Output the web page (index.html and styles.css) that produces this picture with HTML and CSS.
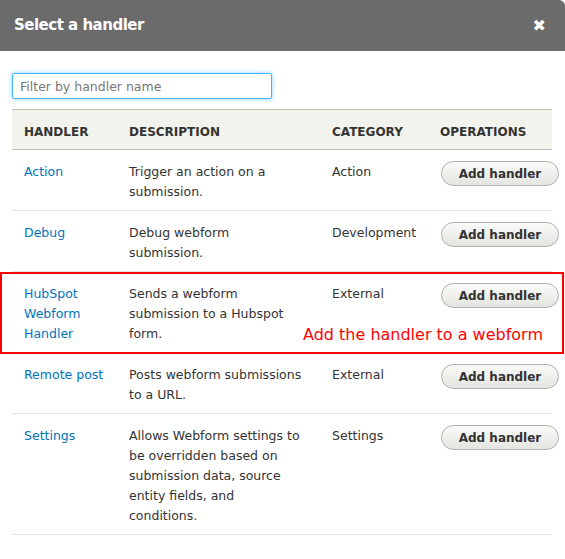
FILE: index.html
```html
<!DOCTYPE html>
<html lang="en">
<head>
  <meta charset="UTF-8" />
  <title>Select a handler</title>
  <link rel="stylesheet" href="styles.css">
</head>
<body>

  <div class="dialog">
    <!-- Title bar -->
    <div class="dialog-title">
      <h1>Select a handler</h1>
      <button class="close">&#x2716;</button>
    </div>

    <div class="dialog-body">
      <input type="text" class="filter" placeholder="Filter by handler name" />

      <table class="handlers">
        <colgroup>
          <col class="c-handler">
          <col class="c-desc">
          <col class="c-cat">
          <col class="c-ops">
        </colgroup>
        <thead>
          <tr>
            <th>Handler</th>
            <th>Description</th>
            <th>Category</th>
            <th>Operations</th>
          </tr>
        </thead>
        <tbody>
          <tr>
            <td><a href="#">Action</a></td>
            <td class="desc">Trigger an action on a submission.</td>
            <td>Action</td>
            <td><button class="add-btn">Add handler</button></td>
          </tr>
          <tr>
            <td><a href="#">Debug</a></td>
            <td class="desc">Debug webform submission.</td>
            <td>Development</td>
            <td><button class="add-btn">Add handler</button></td>
          </tr>
          <tr>
            <td><a href="#">HubSpot Webform Handler</a></td>
            <td class="desc">Sends a webform submission to a Hubspot form.</td>
            <td>External</td>
            <td><button class="add-btn">Add handler</button></td>
          </tr>
          <tr>
            <td><a href="#">Remote post</a></td>
            <td class="desc">Posts webform submissions to a URL.</td>
            <td>External</td>
            <td><button class="add-btn">Add handler</button></td>
          </tr>
          <tr>
            <td><a href="#">Settings</a></td>
            <td class="desc">Allows Webform settings to be overridden based on submission data, source entity fields, and conditions.</td>
            <td>Settings</td>
            <td><button class="add-btn">Add handler</button></td>
          </tr>
        </tbody>
      </table>
    </div>

    <!-- Annotation over the HubSpot row -->
    <div class="callout">
      <span>Add the handler to a webform</span>
    </div>
  </div>

</body>
</html>
```

FILE: styles.css
```css
/* Basic Reset */
* {
  margin: 0;
  padding: 0;
  box-sizing: border-box;
}

body {
  font-family: 'DejaVu Sans', Verdana, sans-serif;
  font-size: 12.5px;
  color: #333;
  background: #fff;
}

.dialog {
  position: relative;
  width: 565px;
  min-height: 559px;
  background: #fff;
}

/* Title bar */
.dialog-title {
  height: 51px;
  background: #6b6b6b;
  border-top-right-radius: 6px;
  display: flex;
  align-items: center;
  justify-content: space-between;
  padding: 0 19px 0 14px;
}

.dialog-title h1 {
  color: #fff;
  font-size: 15px;
  letter-spacing: -0.5px;
  font-weight: bold;
  margin-top: -1px;
}

.close {
  background: none;
  border: none;
  color: #fff;
  font-size: 16px;
  font-family: 'DejaVu Sans', sans-serif;
  cursor: pointer;
}

/* Body */
.dialog-body {
  padding: 22px 13px 0 12px;
}

.filter {
  display: block;
  width: 260px;
  height: 26px;
  padding: 0 7px;
  font-family: inherit;
  font-size: 12.5px;
  color: #333;
  border: 1px solid #40b6ff;
  border-radius: 2px;
  box-shadow: 0 0 5px #8fd2ff;
  outline: none;
}

.filter::placeholder {
  color: #777;
}

/* Table */
.handlers {
  margin-top: 10px;
  width: 540px;
  border-collapse: collapse;
  table-layout: fixed;
}

.c-handler { width: 105px; }
.c-desc { width: 203px; }
.c-cat { width: 108px; }
.c-ops { width: 124px; }

.handlers thead tr {
  background: #f3f3ee;
  border-top: 1px solid #bfbfba;
  border-bottom: 1px solid #bfbfba;
}

.handlers th {
  text-align: left;
  text-transform: uppercase;
  font-size: 12px;
  font-weight: bold;
  height: 40px;
  padding: 4px 12px 0;
}

.handlers td {
  vertical-align: top;
  line-height: 20px;
  padding: 12px 12px 8px;
  border-bottom: 1px solid #e4e4e4;
}

.handlers td.desc {
  padding-right: 17px;
}

.handlers a {
  color: #0074bd;
  text-decoration: none;
}

.add-btn {
  width: 118px;
  height: 25px;
  margin-top: -1px;
  margin-left: 1px;
  font-family: inherit;
  font-size: 12px;
  font-weight: bold;
  color: #333;
  border: 1px solid #b0b0b0;
  border-radius: 13px;
  background: linear-gradient(#fafaf8, #e4e4e0);
  white-space: nowrap;
  cursor: pointer;
}

/* Red annotation box */
.callout {
  position: absolute;
  left: 0;
  top: 272px;
  width: 564px;
  height: 82px;
  border: 2px solid #ff0000;
  pointer-events: none;
}

.callout span {
  position: absolute;
  right: 19px;
  bottom: 8px;
  color: #ff0000;
  font-size: 16px;
}
```
